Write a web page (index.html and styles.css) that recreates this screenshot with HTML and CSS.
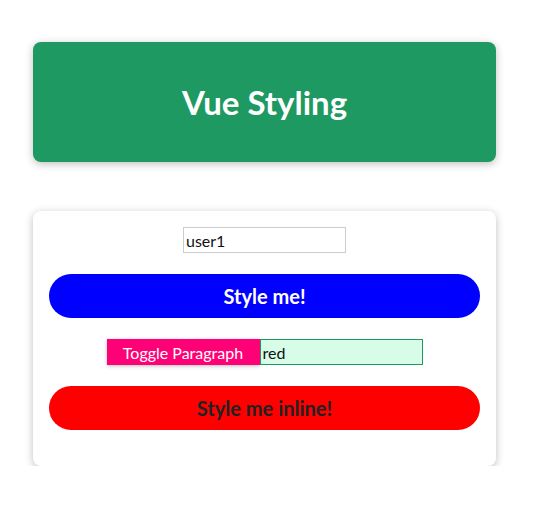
FILE: index.html
```html
<!DOCTYPE html>
<html>
<head>
<meta charset="utf-8">
<link rel="stylesheet" href="styles.css">
</head>
<body>
<header class="header">
  <h1 class="title">Vue Styling</h1>
</header>
<section class="card">
  <input class="user-input" type="text" value="user1">
  <button class="pill pill-blue">Style me!</button>
  <div class="toggle-row">
    <button class="toggle-btn">Toggle Paragraph</button>
    <input class="color-input" type="text" value="red">
  </div>
  <button class="pill pill-red">Style me inline!</button>
</section>
</body>
</html>
```
FILE: styles.css
```css
html, body {
  margin: 0;
  padding: 0;
  background: #ffffff;
  font-family: "Lato", "DejaVu Sans", sans-serif;
}
body {
  padding-top: 42px;
}
.header {
  box-sizing: border-box;
  width: 463px;
  height: 120px;
  margin: 0 0 0 33px;
  background: #1e9962;
  border-radius: 8px;
  box-shadow: 0 2px 8px rgba(0, 0, 0, 0.26);
  display: flex;
  align-items: center;
  justify-content: center;
}
.title {
  margin: 0;
  color: #ffffff;
  font-size: 33px;
  font-weight: 700;
}
.card {
  box-sizing: border-box;
  width: 463px;
  height: 255px;
  margin: 49px 0 0 33px;
  padding: 16px 16px 0;
  background: #ffffff;
  border-radius: 8px;
  box-shadow: 0 2px 8px rgba(0, 0, 0, 0.26);
  display: flex;
  flex-direction: column;
  align-items: center;
}
.user-input {
  box-sizing: border-box;
  width: 163px;
  height: 26px;
  margin: 0;
  padding: 0 2px;
  border: 1px solid #cccccc;
  font-family: inherit;
  font-size: 16px;
  color: #111;
  outline: none;
}
.pill {
  box-sizing: border-box;
  width: 431px;
  height: 44px;
  margin-top: 21px;
  border: none;
  border-radius: 22px;
  font-family: inherit;
  font-size: 20px;
  font-weight: 700;
}
.pill-blue {
  background: #0000ff;
  color: #ffffff;
}
.pill-red {
  background: #ff0000;
  color: #222222;
}
.toggle-row {
  display: flex;
  margin-top: 21px;
}
.toggle-btn {
  box-sizing: border-box;
  width: 153px;
  height: 26px;
  border: none;
  padding: 0;
  background: #ff0077;
  color: #ffffff;
  font-family: inherit;
  font-size: 16px;
  box-shadow: 0 1px 4px rgba(0, 0, 0, 0.26);
}
.color-input {
  box-sizing: border-box;
  width: 163px;
  height: 26px;
  margin: 0;
  padding: 0 2px;
  border: 1px solid #1e9962;
  background: #d7fde9;
  font-family: inherit;
  font-size: 16px;
  color: #111;
  outline: none;
}
```
